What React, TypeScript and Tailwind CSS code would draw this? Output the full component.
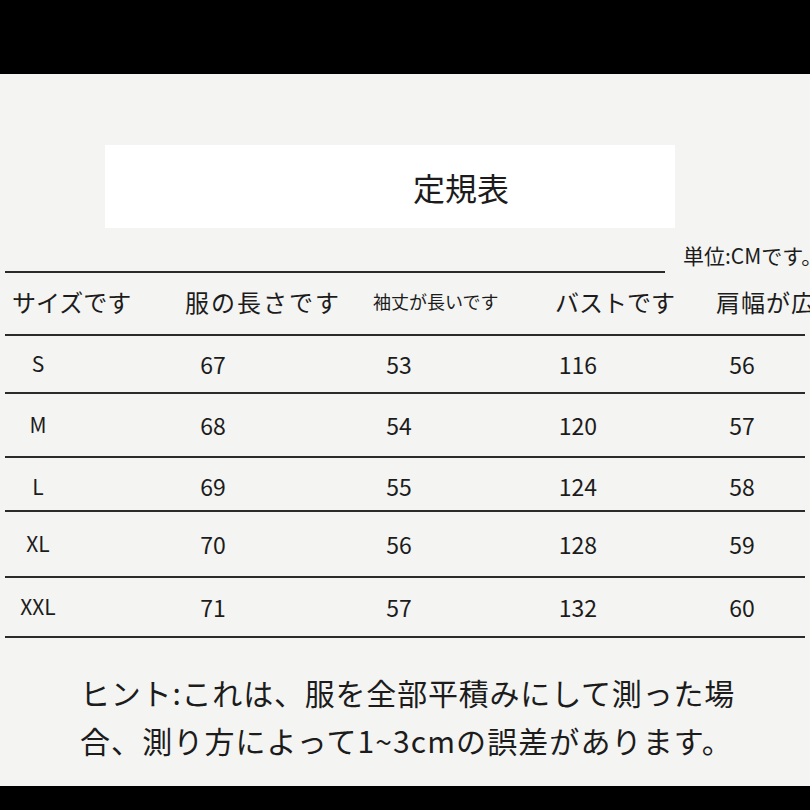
const FONT = "font-['Noto_Sans_CJK_JP','Noto_Sans',sans-serif]"

// -- Table data ----
const ROWS: { size: string; len: string; sleeve: string; bust: string; shoulder: string; h: string }[] = [
  { size: 'S', len: '67', sleeve: '53', bust: '116', shoulder: '56', h: 'h-[56px]' },
  { size: 'M', len: '68', sleeve: '54', bust: '120', shoulder: '57', h: 'h-[62px]' },
  { size: 'L', len: '69', sleeve: '55', bust: '124', shoulder: '58', h: 'h-[52px] pt-[5px]' },
  { size: 'XL', len: '70', sleeve: '56', bust: '128', shoulder: '59', h: 'h-[64px]' },
  { size: 'XXL', len: '71', sleeve: '57', bust: '132', shoulder: '60', h: 'h-[58px]' },
]

function Rule() {
  return <div className="ml-[5px] w-[800px] h-[2px] bg-[#2b2b2b]" />
}

export default function App() {
  return (
    <div className={`w-[810px] h-[810px] overflow-hidden flex flex-col bg-black text-[#1c1c1c] ${FONT}`}>
      <div className="h-[74px] shrink-0 bg-black" />

      <div className="h-[712px] shrink-0 bg-[#f4f4f2] flex flex-col overflow-hidden">
        {/* Title box */}
        <div className="mt-[71px] ml-[105px] w-[570px] h-[83px] bg-white flex items-center">
          <span className="ml-[308px] text-[32px] leading-none">定規表</span>
        </div>

        {/* Unit + top rule; the text runs off the right edge as in the source */}
        <div className="h-[45px] flex items-end">
          <div className="ml-[5px] w-[660px] h-[2px] shrink-0 bg-[#2b2b2b]" />
          <span className="ml-[18px] mb-[6px] shrink-0 text-[21px] leading-[24px] whitespace-nowrap">単位:CMです。</span>
        </div>

        {/* Header */}
        <div className="h-[61px] flex items-center pb-[4px] whitespace-nowrap">
          <span className="pl-[12px] w-[185px] shrink-0 text-[24px]">サイズです</span>
          <span className="w-[188px] shrink-0 text-[24px] tracking-[2px]">服の長さです</span>
          <span className="w-[182px] shrink-0 text-[18px]">袖丈が長いです</span>
          <span className="w-[161px] shrink-0 text-[24px]">バストです</span>
          <span className="shrink-0 text-[24px] tracking-[1px]">肩幅が広いです</span>
        </div>
        <Rule />

        {ROWS.map((r) => (
          <div key={r.size}>
            <div className={`grid grid-cols-[76px_274px_98px_260px_68px] items-center text-center text-[23px] ${r.h}`}>
              <span className="text-[21px]">{r.size}</span>
              <span>{r.len}</span>
              <span>{r.sleeve}</span>
              <span>{r.bust}</span>
              <span>{r.shoulder}</span>
            </div>
            <Rule />
          </div>
        ))}

        {/* Note */}
        <div className="mt-[30px] pl-[80px] text-[30px] leading-[48px] whitespace-nowrap">
          <div className="tracking-[0.8px]">ヒント:これは、服を全部平積みにして測った場</div>
          <div className="tracking-[1.1px]">合、測り方によって1~3cmの誤差があります。</div>
        </div>
      </div>

      <div className="flex-1 bg-black" />
    </div>
  )
}
